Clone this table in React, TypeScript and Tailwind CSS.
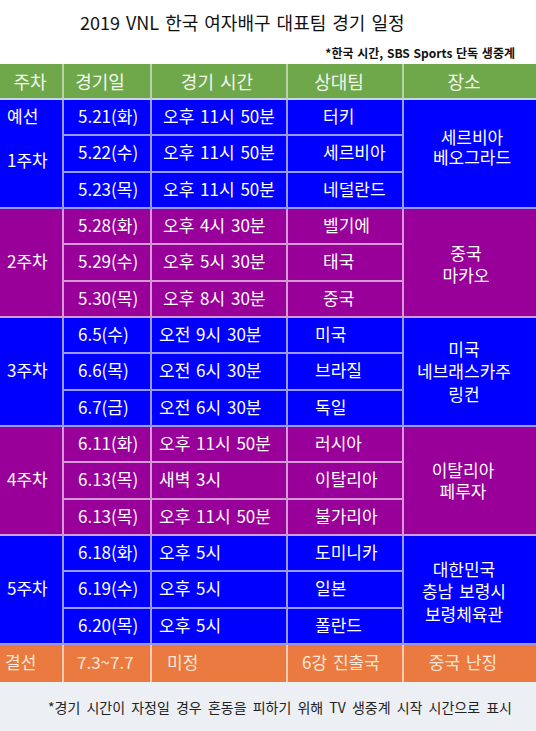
import React from "react";

type Game = { date: string; time: string; opp: string };

type Week = {
  bg: string;
  label: string[];
  timePad: string;
  oppPad: string;
  place: string[];
  placeCls: string;
  games: Game[];
};

const weeks: Week[] = [
  {
    bg: "bg-[#0000ff]",
    label: ["예선", "1주차"],
    timePad: "pl-[11px]",
    oppPad: "pl-[35px]",
    place: ["세르비아", "베오그라드"],
    placeCls: "leading-[20px] pb-[12px] pl-[4px]",
    games: [
      { date: "5.21(화)", time: "오후 11시 50분", opp: "터키" },
      { date: "5.22(수)", time: "오후 11시 50분", opp: "세르비아" },
      { date: "5.23(목)", time: "오후 11시 50분", opp: "네덜란드" },
    ],
  },
  {
    bg: "bg-[#990099]",
    label: ["2주차"],
    timePad: "pl-[11px]",
    oppPad: "pl-[35px]",
    place: ["중국", "마카오"],
    placeCls: "leading-[22px] pt-[4px] pr-[8px]",
    games: [
      { date: "5.28(화)", time: "오후 4시 30분", opp: "벨기에" },
      { date: "5.29(수)", time: "오후 5시 30분", opp: "태국" },
      { date: "5.30(목)", time: "오후 8시 30분", opp: "중국" },
    ],
  },
  {
    bg: "bg-[#0000ff]",
    label: ["3주차"],
    timePad: "pl-[7px]",
    oppPad: "pl-[27px]",
    place: ["미국", "네브래스카주", "링컨"],
    placeCls: "leading-[22.5px] pr-[12px]",
    games: [
      { date: "6.5(수)", time: "오전 9시 30분", opp: "미국" },
      { date: "6.6(목)", time: "오전 6시 30분", opp: "브라질" },
      { date: "6.7(금)", time: "오전 6시 30분", opp: "독일" },
    ],
  },
  {
    bg: "bg-[#990099]",
    label: ["4주차"],
    timePad: "pl-[7px]",
    oppPad: "pl-[27px]",
    place: ["이탈리아", "페루자"],
    placeCls: "leading-[21px] pr-[14px]",
    games: [
      { date: "6.11(화)", time: "오후 11시 50분", opp: "러시아" },
      { date: "6.13(목)", time: "새벽 3시", opp: "이탈리아" },
      { date: "6.13(목)", time: "오후 11시 50분", opp: "불가리아" },
    ],
  },
  {
    bg: "bg-[#0000ff]",
    label: ["5주차"],
    timePad: "pl-[7px]",
    oppPad: "pl-[27px]",
    place: ["대한민국", "충남 보령시", "보령체육관"],
    placeCls: "leading-[22.5px] pt-[4px] pr-[12px]",
    games: [
      { date: "6.18(화)", time: "오후 5시", opp: "도미니카" },
      { date: "6.19(수)", time: "오후 5시", opp: "일본" },
      { date: "6.20(목)", time: "오후 5시", opp: "폴란드" },
    ],
  },
];

const line = "border-white/60";

const App = () => {
  return (
    <div
      className="w-[536px] h-[731px] bg-white overflow-hidden flex flex-col"
      style={{ fontFamily: '"Noto Sans CJK KR", "Noto Sans", sans-serif' }}
    >
      <div className="h-[42px] flex items-center pl-[80px] pt-[2px] text-[18px] text-[#111] [word-spacing:2px]">
        2019 VNL 한국 여자배구 대표팀 경기 일정
      </div>
      <div className="h-[22px] flex items-start justify-end pr-[21px] text-[12px] font-bold text-[#111] leading-[22px] [word-spacing:1px]">
        *한국 시간, SBS Sports 단독 생중계
      </div>

      <div className="grid grid-cols-[64px_88px_136px_116px_132px] grid-rows-[36px_repeat(15,36.33px)_37px] text-white text-[17px] [word-spacing:2px]">
        {["주차", "경기일", "경기 시간", "상대팀", "장소"].map((h, i) => (
          <div
            key={h}
            className={`bg-[#6fa84a] flex items-center justify-center text-[18px] text-[#f2f6ee] border-b-2 border-[#c9d6ea] ${
              i < 4 ? "border-r-2 border-r-white/50" : ""
            } ${i === 0 ? "pr-[2px]" : i === 1 ? "pr-[14px]" : i === 2 ? "pr-[4px]" : "pr-[12px]"}`}
          >
            {h}
          </div>
        ))}

        {weeks.map((w, wi) => (
          <React.Fragment key={wi}>
            {w.games.map((g, gi) => (
              <React.Fragment key={gi}>
                {gi === 0 && (
                  <div
                    className={`${w.bg} row-span-3 border-r-2 border-b-2 ${line} flex flex-col ${
                      w.label.length > 1 ? "justify-start" : "justify-center pb-[4px]"
                    } pl-[7px]`}
                  >
                    {w.label.length > 1 ? (
                      <>
                        <span className="leading-[32px]">{w.label[0]}</span>
                        <span className="leading-[32px] mt-[12px]">{w.label[1]}</span>
                      </>
                    ) : (
                      <span>{w.label[0]}</span>
                    )}
                  </div>
                )}
                <div className={`${w.bg} border-r-2 border-b-2 ${line} flex items-center pl-[14px] pb-[3px]`}>
                  {g.date}
                </div>
                <div className={`${w.bg} border-r-2 border-b-2 ${line} flex items-center ${w.timePad} pb-[3px] whitespace-nowrap`}>
                  {g.time}
                </div>
                <div className={`${w.bg} border-r-2 border-b-2 ${line} flex items-center ${w.oppPad} pb-[3px]`}>
                  {g.opp}
                </div>
                {gi === 0 && (
                  <div
                    className={`${w.bg} row-span-3 border-b-2 ${line} flex items-center justify-center text-center ${w.placeCls}`}
                  >
                    <p className="whitespace-pre-line">{w.place.join("\n")}</p>
                  </div>
                )}
              </React.Fragment>
            ))}
          </React.Fragment>
        ))}

        <div className={`bg-[#ea7a40] border-r-2 ${line} flex items-center pl-[5px] pb-[4px] text-[#fbe6da]`}>
          결선
        </div>
        <div className={`bg-[#ea7a40] border-r-2 ${line} flex items-center pl-[13px] pb-[4px] text-[#fbe6da]`}>
          7.3~7.7
        </div>
        <div className={`bg-[#ea7a40] border-r-2 ${line} flex items-center pl-[15px] pb-[4px] text-[#fbe6da]`}>
          미정
        </div>
        <div className={`bg-[#ea7a40] border-r-2 ${line} flex items-center pl-[14px] pb-[4px] text-[#fbe6da]`}>
          6강 진출국
        </div>
        <div className="bg-[#ea7a40] flex items-center justify-center pr-[14px] pb-[4px] text-[#fbe6da]">
          중국 난징
        </div>
      </div>

      <div className="flex-1 bg-[#eceff4] flex items-center justify-end pr-[24px] pt-[3px] text-[14px] text-[#222] [word-spacing:3px]">
        *경기 시간이 자정일 경우 혼동을 피하기 위해 TV 생중계 시작 시간으로 표시
      </div>
    </div>
  );
};

export default App;
